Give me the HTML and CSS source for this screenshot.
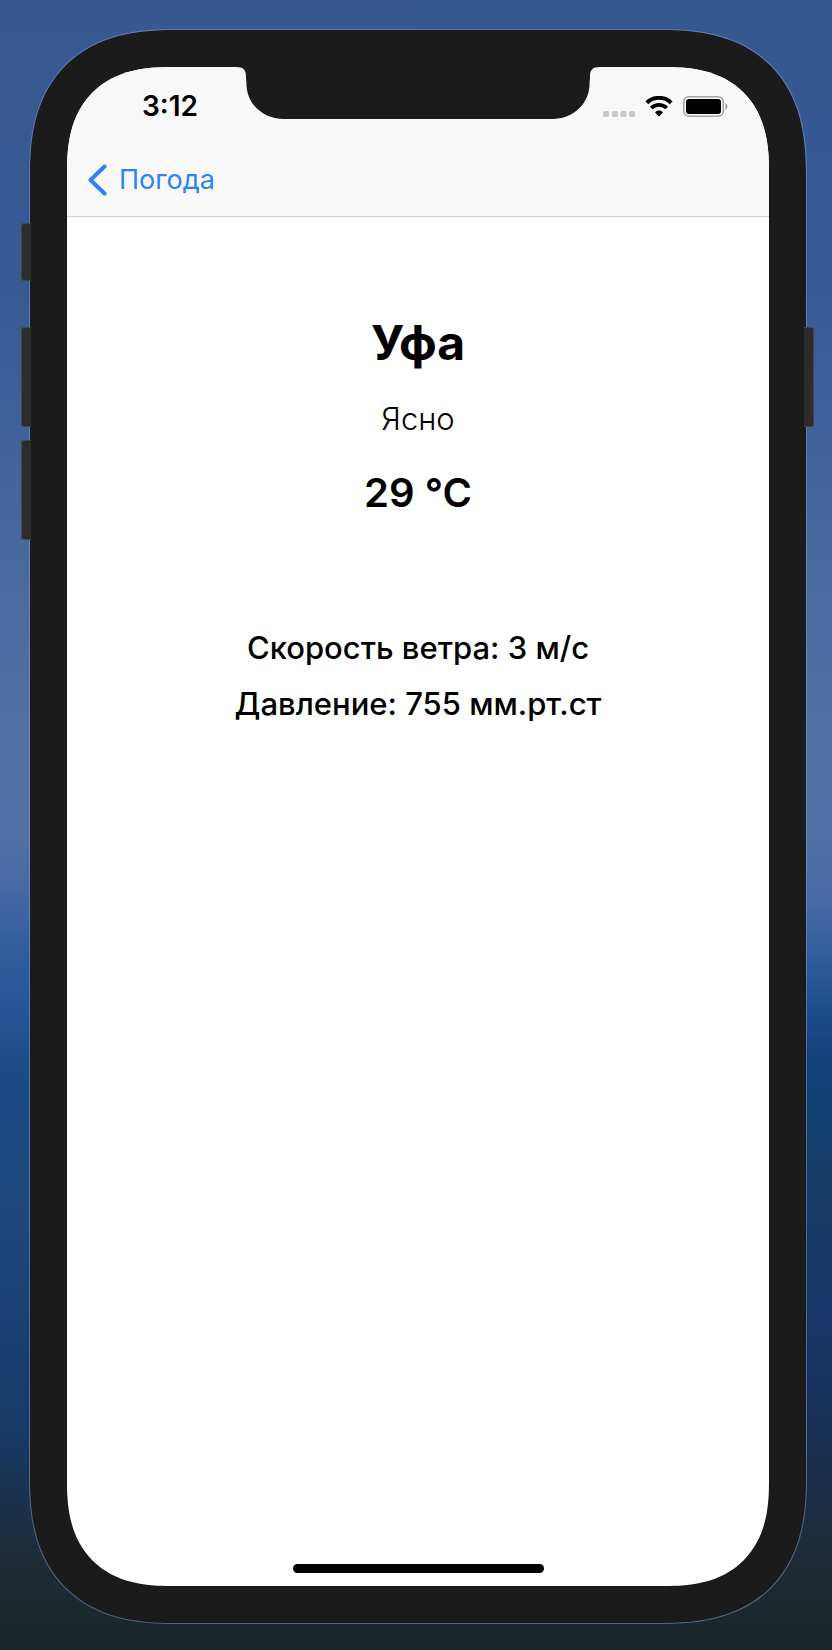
FILE: index.html
```html
<!DOCTYPE html>
<html lang="ru">
<head>
<meta charset="utf-8">
<meta name="viewport" content="width=device-width, initial-scale=1">
<title>Погода — Уфа</title>
<link rel="stylesheet" href="styles.css">
</head>
<body>
<div class="phone">
  <span class="side-button side-button--mute"></span>
  <span class="side-button side-button--up"></span>
  <span class="side-button side-button--down"></span>
  <span class="side-button side-button--power"></span>
  <div class="screen">
    <svg class="notch" viewBox="0 0 364 52" aria-hidden="true">
      <path d="M0 -1V0C8 0 10 3 10 10C10 13 10.500 14 10.500 18C11 36 26 52 48 52H316C338 52 353 36 353.500 18C353.500 14 354 13 354 10C354 3 356 0 364 0V-1Z" fill="#1b1b1b"/>
    </svg>
    <header class="header">
      <div class="status">
        <time class="clock">3:12</time>
        <div class="indicators">
          <svg class="signal" width="32" height="21" viewBox="0 0 32 21" fill="#c8c8c8" aria-hidden="true">
            <rect x="0" y="15" width="6" height="6" rx="1.500"/>
            <rect x="9" y="15" width="6" height="6" rx="1.500"/>
            <rect x="17.500" y="15" width="6" height="6" rx="1.500"/>
            <rect x="26" y="15" width="6" height="6" rx="1.500"/>
          </svg>
          <svg class="wifi" width="28" height="21" viewBox="0 0 28 21" aria-hidden="true">
            <path d="M1.800 6.800A17.500 17.500 0 0 1 26.200 6.800" fill="none" stroke="#000" stroke-width="4"/>
            <path d="M6.300 12A11 11 0 0 1 21.700 12" fill="none" stroke="#000" stroke-width="3.800"/>
            <path d="M14 20.600L10.200 16.800Q10.200 15.800 11.300 15.200Q14 13.600 16.700 15.200Q17.800 15.800 17.800 16.800Z"/>
          </svg>
          <svg class="battery" width="45" height="21" viewBox="0 0 45 21" aria-hidden="true">
            <rect x="0.750" y="0.750" width="39.500" height="19.500" rx="5" fill="#f8f8f8" stroke="#a3a3a3" stroke-width="1.500"/>
            <rect x="3" y="3" width="35" height="15" rx="3"/>
            <path d="M42.300 7Q44.500 8 44.500 10.500T42.300 14Z" fill="#a3a3a3"/>
          </svg>
        </div>
      </div>
      <nav class="nav">
        <a class="back" href="#">
          <svg width="19" height="32" viewBox="0 0 19 32" aria-hidden="true">
            <path d="M16.500 2.500L2.500 16L16.500 29.500" fill="none" stroke="#2f82f7" stroke-width="4" stroke-linecap="round" stroke-linejoin="round"/>
          </svg>
          <span>Погода</span>
        </a>
      </nav>
    </header>
    <main class="weather">
      <h1 class="city">Уфа</h1>
      <p class="condition">Ясно</p>
      <p class="temperature">29 °C</p>
      <div class="details">
        <p>Скорость ветра: 3 м/с</p>
        <p>Давление: 755 мм.рт.ст</p>
      </div>
    </main>
    <div class="home-indicator"></div>
  </div>
</div>
</body>
</html>
```
FILE: styles.css
```css
* {
  box-sizing: border-box;
}

body {
  margin: 0;
  min-height: 100vh;
  padding: 29px 25px 26px 29px;
  display: flex;
  font-family: Inter, "Liberation Sans", sans-serif;
  color: #000;
  /* The wallpaper darkens earlier on its right half. */
  background:
    linear-gradient(
      #365890 0%,
      #375a96 17%,
      #4a6aa1 36%,
      #5170a6 45%,
      #4f6fa6 51%,
      #4668a5 55%,
      #335d9c 58%,
      #1d4e8d 61%,
      #12427c 64%,
      #134074 67%,
      #163a66 72%,
      #18366a 80%,
      #1a3154 87%,
      #1c2e45 91%,
      #1e2b34 95%,
      #1c2527 100%
    ) right / 50% 100% no-repeat,
    linear-gradient(
      #385890 0%,
      #375a95 17%,
      #4a6aa1 36%,
      #5170a6 45%,
      #4f6fa6 51%,
      #4668a5 54%,
      #355e9f 57%,
      #265699 61%,
      #1b4a85 65%,
      #20487f 73%,
      #1a4075 80%,
      #163966 87%,
      #1b314b 91%,
      #1e2b34 95%,
      #1c2527 100%
    );
}

h1,
p {
  margin: 0;
}

.phone {
  position: relative;
  flex: 1;
  display: flex;
  padding: 37px;
  border: 1px solid rgba(130, 160, 205, 0.5);
  border-radius: 124px;
  background: #1b1b1b;
  background-clip: padding-box;
}

.side-button {
  position: absolute;
  left: -9px;
  width: 10px;
  height: 100px;
  border: 1px solid #464646;
  border-right: 0;
  border-radius: 3px 0 0 3px;
  background: #2c2c2c;
}

.side-button--mute {
  top: 193px;
  height: 58px;
}

.side-button--up {
  top: 297px;
}

.side-button--down {
  top: 410px;
}

.side-button--power {
  top: 297px;
  right: -8px;
  left: auto;
  border: 1px solid #464646;
  border-left: 0;
  border-radius: 0 3px 3px 0;
}

.screen {
  position: relative;
  flex: 1;
  display: flex;
  flex-direction: column;
  overflow: hidden;
  border-radius: 88px;
  background: #fff;
}

@supports (corner-shape: superellipse(1.3)) {
  .phone {
    border-radius: 146px;
    corner-shape: superellipse(1.3);
  }

  .screen {
    border-radius: 104px;
    corner-shape: superellipse(1.3);
  }
}

.notch {
  position: absolute;
  top: 0;
  left: 50%;
  width: 364px;
  height: 52px;
  transform: translateX(-50%);
}

.header {
  padding-bottom: 2px;
  border-bottom: 1px solid #d2d2d2;
  background: #f8f8f8;
}

.status {
  display: flex;
  align-items: center;
  justify-content: space-between;
  height: 79px;
  padding: 0 41px 0 75px;
}

.clock {
  font-size: 28px;
  font-weight: 600;
  line-height: 33px;
}

.indicators {
  display: flex;
  align-items: center;
  gap: 10px;
}

.nav {
  display: flex;
  align-items: center;
  height: 68px;
  padding: 0 21px;
}

.back {
  display: flex;
  align-items: center;
  gap: 12px;
  color: #2f82f7;
  font-size: 27px;
  line-height: 32px;
  text-decoration: none;
}

.weather {
  flex: 1;
  padding-top: 97px;
  text-align: center;
}

.city {
  font-size: 48px;
  font-weight: 700;
  line-height: 58px;
}

.condition {
  margin-top: 25px;
  font-size: 31px;
  font-weight: 300;
  line-height: 44px;
}

.temperature {
  margin-top: 28px;
  font-size: 40px;
  font-weight: 600;
  line-height: 48px;
}

.details {
  display: grid;
  gap: 16px;
  margin-top: 111px;
  font-size: 31px;
  font-weight: 500;
  line-height: 40px;
}

.home-indicator {
  width: 251px;
  height: 9px;
  margin: 0 auto 13px;
  border-radius: 5px;
  background: #000;
}
```
